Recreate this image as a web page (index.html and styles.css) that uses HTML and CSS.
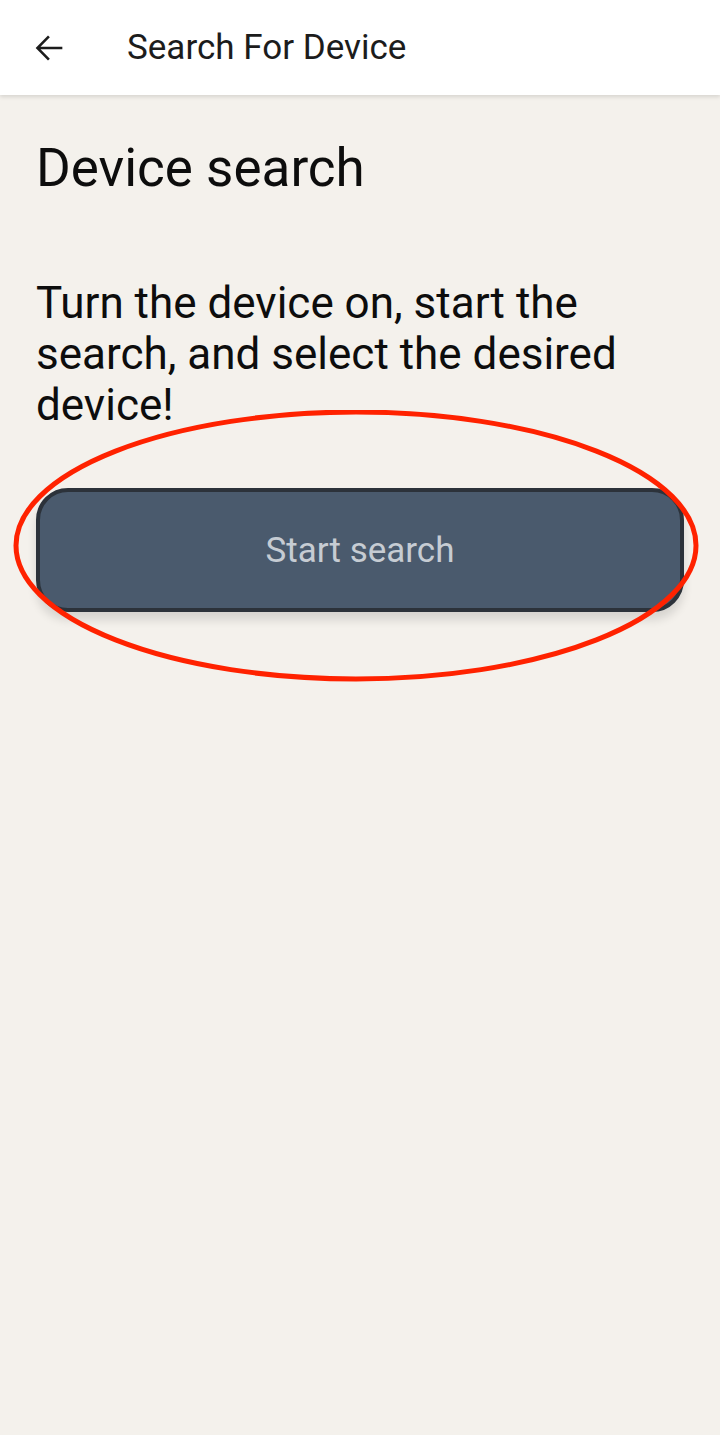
FILE: index.html
```html
<!DOCTYPE html>
<html>
    <head>
        <meta charset="utf-8" />
        <title>Search For Device</title>
        <link rel="stylesheet" href="styles.css">
    </head>
    <body>
        <div id="app">
            <div class="toolbar">
                <div class="back">
                    <svg viewBox="0 0 24 24" width="40" height="40">
                        <path d="M20 11.2H6.9l5.6-5.6-1.1-1.1L4 12l7.4 7.5 1.1-1.1-5.6-5.6H20z" fill="#1c1c1c" />
                    </svg>
                </div>
                <div class="title">Search For Device</div>
            </div>
            <div class="content">
                <h1 class="heading">Device search</h1>
                <p class="hint">Turn the device on, start the search, and select the desired device!</p>
                <div class="button-wrap">
                    <div class="button">Start search</div>
                    <svg class="mark" viewBox="0 0 720 300" width="720" height="300">
                        <ellipse cx="356" cy="135.5" rx="340" ry="133.5" fill="none" stroke="#ff2200" stroke-width="5" />
                    </svg>
                </div>
            </div>
        </div>
    </body>
</html>
```

FILE: styles.css
```css
body {
    margin: 0;
    background: #f4f1ec;
    font-family: Roboto, "Noto Sans", sans-serif;
}
#app {
    width: 720px;
    height: 1435px;
    overflow: hidden;
}
.toolbar {
    height: 95px;
    background: #ffffff;
    display: flex;
    align-items: center;
    box-shadow: 0 2px 4px rgba(0, 0, 0, 0.12);
    position: relative;
    z-index: 2;
}
.back {
    width: 40px;
    height: 40px;
    margin-left: 29px;
    display: flex;
}
.title {
    margin-left: 58px;
    font-size: 35px;
    color: #1c1c1c;
    font-weight: 400;
}
.content {
    padding: 0 36px;
}
.heading {
    margin: 40px 0 0;
    font-size: 53px;
    font-weight: 400;
    line-height: 66px;
    color: #0d0d0d;
}
.hint {
    margin: 77px 0 0;
    font-size: 44px;
    line-height: 51px;
    color: #0d0d0d;
}
.button-wrap {
    position: relative;
    margin-top: 57px;
}
.button {
    height: 116px;
    border: 4px solid #2c323a;
    border-radius: 32px;
    background: #4a5a6d;
    color: #c6ccd3;
    font-size: 35px;
    display: flex;
    align-items: center;
    justify-content: center;
    box-shadow: 0 8px 10px rgba(0, 0, 0, 0.12);
}
.mark {
    position: absolute;
    left: -36px;
    top: -78px;
}
```
